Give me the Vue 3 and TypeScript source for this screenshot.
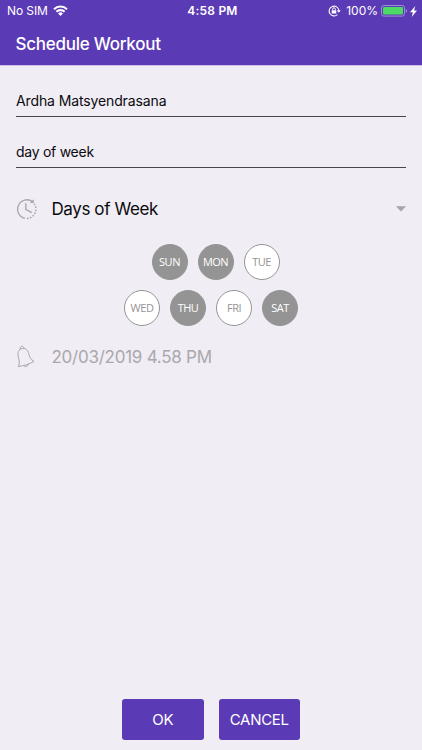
<script setup lang="ts">
import { ref } from 'vue'

interface Day {
  label: string
  on: boolean
}

const exercise = ref('Ardha Matsyendrasana')
const note = ref('day of week')
const rows = ref<Day[][]>([
  [
    { label: 'SUN', on: true },
    { label: 'MON', on: true },
    { label: 'TUE', on: false },
  ],
  [
    { label: 'WED', on: false },
    { label: 'THU', on: true },
    { label: 'FRI', on: false },
    { label: 'SAT', on: true },
  ],
])
</script>

<template>
  <div class="screen">
    <header class="header">
      <div class="status">
        <div class="status-left">
          <span class="carrier">No SIM</span>
          <svg class="wifi" width="15" height="11" viewBox="0 0 15 11" fill="none" stroke="#fff" stroke-width="2.1">
            <path d="M1 4.200a9.300 9.300 0 0 1 13 0" />
            <path d="M3.400 6.800a5.800 5.800 0 0 1 8.200 0" />
            <path d="M7.500 10.900 5.100 8.500a3.300 3.300 0 0 1 4.800 0z" fill="#fff" stroke="none" />
          </svg>
        </div>
        <span class="time">4:58 PM</span>
        <div class="status-right">
          <svg class="lock" width="13" height="12" viewBox="0 0 13 12" fill="none" stroke="#fff">
            <path d="M9.400 9.600A4.900 4.900 0 1 1 10.900 5.400" stroke-width="1.100" />
            <path d="M8.900 5.200h3.800l-1.900 2.500z" fill="#fff" stroke="none" />
            <rect x="3.700" y="5.200" width="4.600" height="3.400" rx=".4" fill="#fff" stroke="none" />
            <path d="M4.600 5.300V4.200a1.400 1.400 0 0 1 2.800 0v1.100" stroke-width=".9" />
          </svg>
          <span class="percent">100%</span>
          <svg class="battery" width="27" height="12" viewBox="0 0 27 12">
            <rect x=".5" y=".5" width="23" height="10.600" rx="2.400" fill="none" stroke="#a08fd6" />
            <rect x="2" y="2" width="20" height="7.600" rx="1" fill="#4cd964" />
            <path d="M24.900 4v3.800c1.600-.5 1.600-3.300 0-3.800z" fill="#a08fd6" />
          </svg>
          <svg class="bolt" width="7" height="11" viewBox="0 0 7 11">
            <path d="M5.300 0 0 6.200h2.900L1.700 11 7 4.600H4z" fill="#fff" />
          </svg>
        </div>
      </div>
      <h1 class="title">Schedule Workout</h1>
    </header>

    <main class="content">
      <div class="field"><span class="exercise">{{ exercise }}</span></div>
      <div class="field"><span class="note">{{ note }}</span></div>

      <div class="row repeat">
        <svg class="icon" width="22" height="22" viewBox="0 0 22 22" fill="none" stroke="#a9a8ac" stroke-width="1.400">
          <path d="M8.800 20.300A9.400 9.400 0 1 1 16.600 3.600" />
          <path d="M17.900 1.200v3.900h-4.300z" fill="#a9a8ac" stroke="none" />
          <path d="M18.600 6.300A9.400 9.400 0 0 1 10.300 20.500" stroke-width="1.700" stroke-linecap="round" stroke-dasharray=".1 2.950" />
          <path d="M9.800 5.300v6.100l6 3.200" />
        </svg>
        <span class="repeat-label">Days of Week</span>
        <svg class="caret" width="10" height="6" viewBox="0 0 10 6"><path d="M0 .2h10L5 5.600z" fill="#a5a4a9" /></svg>
      </div>

      <div class="days">
        <div v-for="(row, i) in rows" :key="i" class="day-row">
          <button v-for="day in row" :key="day.label" class="day" :class="{ on: day.on }" @click="day.on = !day.on">
            {{ day.label }}
          </button>
        </div>
      </div>

      <div class="row reminder">
        <svg class="icon" width="22" height="24" viewBox="0 0 22 24" fill="none" stroke="#a9a8ac" stroke-width="1" stroke-linejoin="round">
          <path d="M2.300 21.600C3.500 19.400 3.600 17 2.700 13.500 1.700 9.500 1.200 5.300 5.200 3.800c4.300-1.500 6.700 1.200 7.600 5 .9 3.700 1.900 5.700 5.200 7.600-4.500 2.600-9.800 4.300-15.700 5.200z" />
          <path d="M4.500 4.100C3.900 2.400 4.700 1.400 5.700 1.300c1.100-.2 1.900.6 2.200 2.100" />
          <path d="M7.600 20.500c.7 1.700 4.400 1.300 4.700-1.300" />
        </svg>
        <span class="reminder-label">20/03/2019 4.58 PM</span>
      </div>
    </main>

    <footer class="actions">
      <button class="action ok">OK</button>
      <button class="action cancel">CANCEL</button>
    </footer>
  </div>
</template>

<style>
body {
  background: #f0edf4;
}
</style>

<style scoped>
.screen {
  display: flex;
  flex-direction: column;
  box-sizing: border-box;
  height: 750px;
  background: #f0edf4;
  font-family: Inter, "Liberation Sans", sans-serif;
  color: #0b0a0e;
}
.header {
  height: 65px;
  background: #5b3bb5;
  border-bottom: 1px solid #c9bfe6;
  color: #fff;
  box-sizing: content-box;
}
.status {
  display: grid;
  grid-template-columns: 1fr auto 1fr;
  align-items: center;
  height: 22px;
  padding: 0 5px 0 7px;
  font-size: 12px;
  line-height: 22px;
}
.status-left,
.status-right {
  display: flex;
  align-items: center;
}
.status-left {
  gap: 5px;
}
.wifi {
  margin-top: -1px;
}
.status-right {
  justify-content: flex-end;
}
.carrier {
  letter-spacing: -0.1px;
}
.time {
  padding-left: 1px;
  font-weight: 600;
  letter-spacing: 0.2px;
}
.percent {
  margin: 0 3px 0 5px;
}
.bolt {
  margin-left: 2px;
}
.title {
  margin: 0;
  padding: 11px 15.5px 0;
  font-size: 17px;
  font-weight: 500;
  line-height: 22px;
  letter-spacing: -0.25px;
}
.content {
  flex: 1;
  padding: 0 16px;
}
.field {
  display: flex;
  align-items: flex-end;
  box-sizing: border-box;
  height: 51px;
  padding-bottom: 5px;
  border-bottom: 1px solid #47454d;
  font-size: 14px;
  line-height: 21px;
}
.exercise {
  letter-spacing: -0.12px;
}
.note {
  letter-spacing: -0.27px;
}
.row {
  display: flex;
  align-items: center;
  height: 24px;
}
.icon {
  flex: none;
  margin-left: -0.5px;
  margin-right: 14px;
}
.repeat {
  margin-top: 29px;
  font-size: 17px;
}
.repeat-label {
  letter-spacing: -0.4px;
}
.caret {
  margin-left: auto;
}
.days {
  display: flex;
  flex-direction: column;
  gap: 10px;
  margin-top: 23px;
}
.day-row {
  display: flex;
  justify-content: center;
  gap: 10px;
}
.day-row:first-child {
  padding-left: 9px;
}
.day {
  box-sizing: border-box;
  width: 36px;
  height: 36px;
  padding: 0;
  border: 1px solid #949494;
  border-radius: 50%;
  background: #fff;
  color: #949494;
  font: 11px/34px "Open Sans", "Noto Sans", sans-serif;
  letter-spacing: -0.5px;
  text-align: center;
}
.day.on {
  background: #949494;
  color: #fff;
}
.reminder {
  margin-top: 19px;
  font-size: 17px;
  color: #a9a8ac;
}
.reminder-label {
  letter-spacing: -0.25px;
}
.actions {
  display: flex;
  justify-content: center;
  gap: 15px;
  padding-bottom: 10.5px;
}
.action {
  width: 81.5px;
  height: 41px;
  padding: 0;
  border: 0;
  border-radius: 3px;
  background: #5b3bb5;
  color: #fff;
  font: 15px/41px Inter, sans-serif;
  letter-spacing: -0.3px;
}
</style>
